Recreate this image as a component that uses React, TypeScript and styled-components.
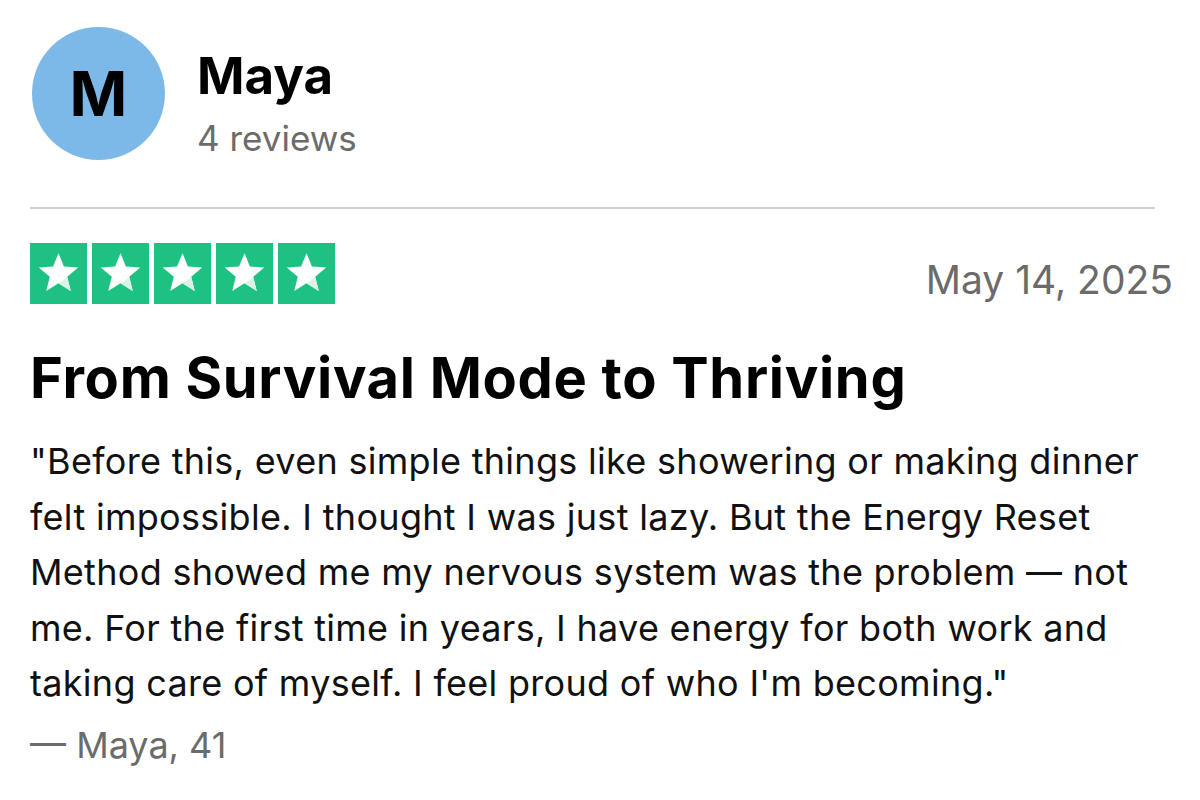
import styled, { createGlobalStyle } from 'styled-components';

const GlobalStyle = createGlobalStyle`
  html, body {
    margin: 0;
    padding: 0;
    background: #ffffff;
  }
  body {
    font-family: Inter, 'Liberation Sans', Arial, sans-serif;
    color: #111111;
  }
`;

const Star = () => (
  <svg width="47" height="47" viewBox="0 0 24 24">
    <polygon
      points="12,1.6 14.75,8.45 22.1,8.95 16.45,13.7 18.25,20.9 12,16.95 5.75,20.9 7.55,13.7 1.9,8.95 9.25,8.45"
      fill="#ffffff"
    />
    <polygon points="16.45,13.7 18.25,20.9 12,16.95 14.6,15.5" fill="#d9f3e6" />
  </svg>
);

const App = () => {
  return (
    <>
      <GlobalStyle />
      <Page>
        <Header>
          <Avatar>M</Avatar>
          <NameBlock>
            <Name>Maya</Name>
            <ReviewCount>4 reviews</ReviewCount>
          </NameBlock>
        </Header>
        <Divider />
        <RatingRow>
          <Stars>
            {[0, 1, 2, 3, 4].map((i) => (
              <StarBox key={i}>
                <Star />
              </StarBox>
            ))}
          </Stars>
          <DateText>May 14, 2025</DateText>
        </RatingRow>
        <Title>From Survival Mode to Thriving</Title>
        <Body>
          "Before this, even simple things like showering or making dinner felt impossible. I
          thought I was just lazy. But the Energy Reset Method showed me my nervous system was
          the problem — not me. For the first time in years, I have energy for both work and
          taking care of myself. I feel proud of who I'm becoming."
        </Body>
        <Signature>— Maya, 41</Signature>
      </Page>
    </>
  );
};

export default App;

const Page = styled.div`
  width: 1200px;
  height: 800px;
  box-sizing: border-box;
  padding: 27px 27px 0 30px;
  overflow: hidden;
`;

const Header = styled.div`
  display: flex;
  align-items: flex-start;
  gap: 32px;
`;

const Avatar = styled.div`
  width: 133px;
  height: 133px;
  margin-left: 2px;
  border-radius: 50%;
  background: #7db9e8;
  display: flex;
  align-items: center;
  justify-content: center;
  font-size: 62px;
  font-weight: 700;
  color: #000000;
  flex-shrink: 0;
`;

const NameBlock = styled.div`
  display: flex;
  flex-direction: column;
  padding-top: 19px;
`;

const Name = styled.div`
  font-size: 51px;
  line-height: 60px;
  font-weight: 700;
  color: #000000;
`;

const ReviewCount = styled.div`
  margin-top: 10px;
  font-size: 35px;
  line-height: 44px;
  color: #6b6b6b;
`;

const Divider = styled.hr`
  margin: 47px 18px 0 0;
  border: none;
  height: 2px;
  background: #cfcfcf;
`;

const RatingRow = styled.div`
  margin-top: 34px;
  display: flex;
  justify-content: space-between;
  align-items: flex-end;
`;

const Stars = styled.div`
  display: flex;
  gap: 5px;
`;

const StarBox = styled.div`
  width: 57px;
  height: 61px;
  background: #1dc283;
  display: flex;
  align-items: center;
  justify-content: center;
`;

const DateText = styled.div`
  font-size: 39px;
  line-height: 48px;
  color: #6b6b6b;
`;

const Title = styled.h1`
  margin: 40px 0 0;
  font-size: 56px;
  line-height: 68px;
  font-weight: 700;
  letter-spacing: 0.7px;
  color: #000000;
`;

const Body = styled.p`
  margin: 22px 0 0;
  width: 1140px;
  font-size: 36px;
  line-height: 55.5px;
  letter-spacing: 0.3px;
  color: #111111;
`;

const Signature = styled.div`
  margin-top: 6px;
  font-size: 36px;
  line-height: 55.5px;
  color: #6b6b6b;
`;
